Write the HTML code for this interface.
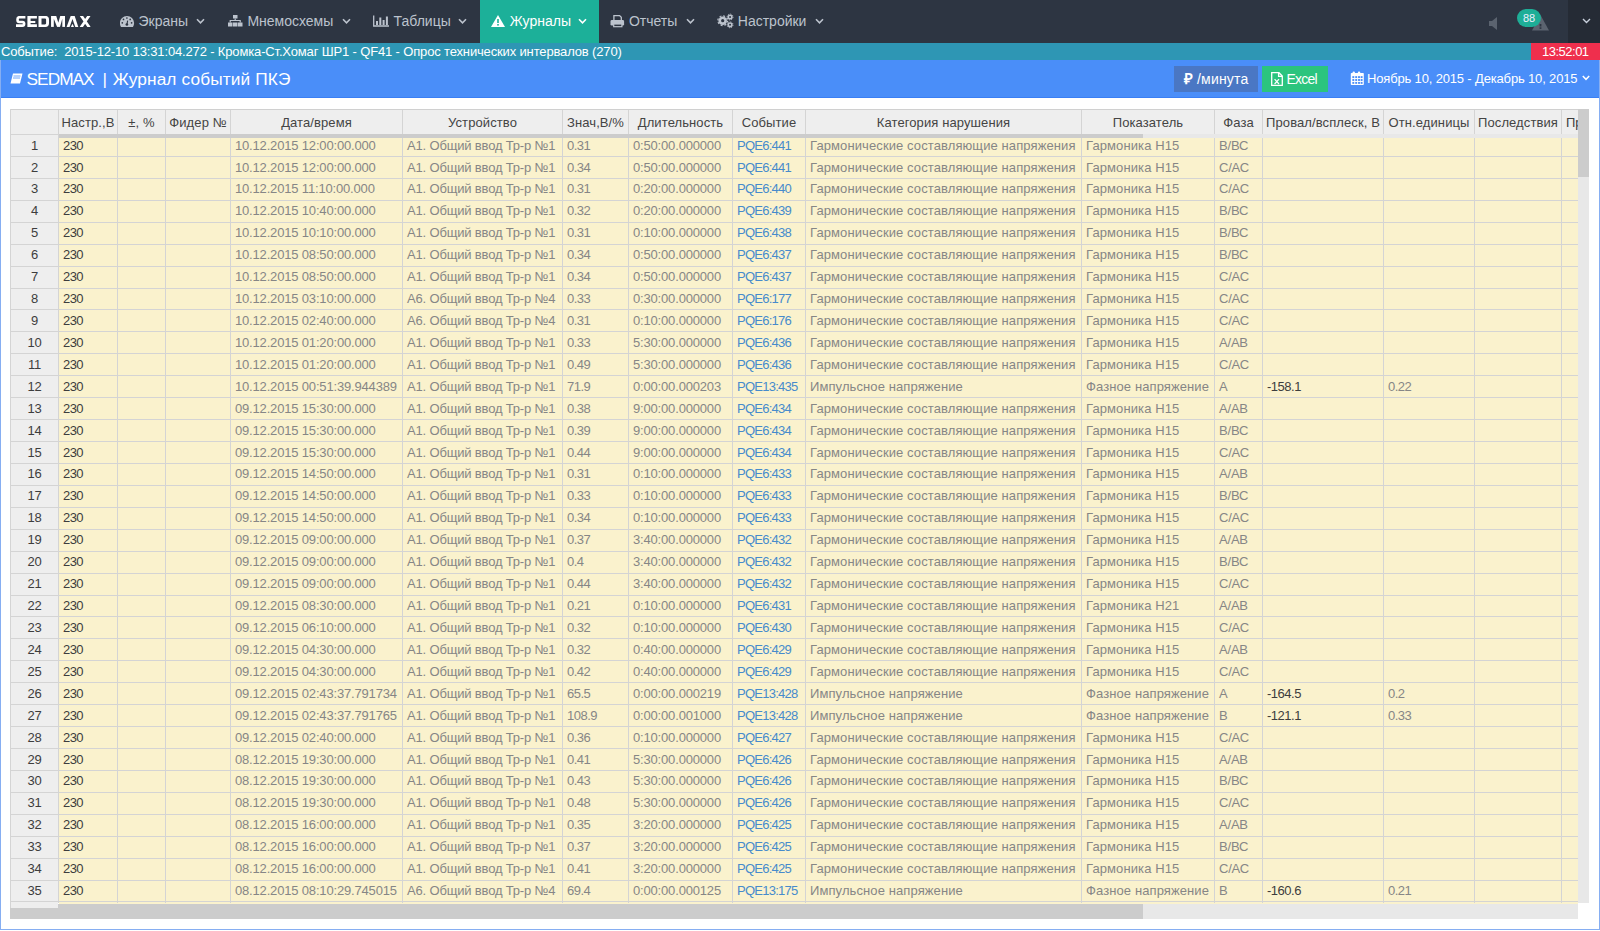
<!DOCTYPE html><html><head><meta charset="utf-8"><title>SEDMAX</title><style>
*{margin:0;padding:0;box-sizing:border-box}
html,body{width:1600px;height:931px;overflow:hidden;background:#fff;font-family:"Liberation Sans",sans-serif}
.abs{position:absolute}
#nav{position:absolute;left:0;top:0;width:1600px;height:43px;background:#2d3542}
#navr{position:absolute;left:1568px;top:0;width:32px;height:43px;background:#252b35}
.ni{position:absolute;top:0;height:43px;line-height:42px;font-size:14px;color:#bcc3cd;white-space:nowrap}
.ni.act{background:#1cb099;color:#fff}
#evt{position:absolute;left:0;top:43px;width:1600px;height:17px;background:#2e96b4;color:#fff;font-size:13px;line-height:18px;white-space:nowrap}
#clk{position:absolute;left:1531px;top:43px;width:69px;height:17px;background:#ef2f4d;color:#fff;font-size:13px;line-height:18px}
#panel{position:absolute;left:0;top:60px;width:1600px;height:871px;}
#ph{position:absolute;left:0;top:60px;width:1599px;height:38px;background:#4a8ef9;border-bottom:1px solid #3a7ff5}
.pb{position:absolute;background:#86aef2}
.btn{position:absolute;top:66px;height:26px;color:#fff;font-size:14px;line-height:26px;white-space:nowrap}
#tbl{position:absolute;left:0;top:0;width:1600px;height:931px;overflow:hidden}
.hl{position:absolute;height:1px;background:#d4d4d4}
.vl{position:absolute;width:1px;background:#d4d4d4}
.t{position:absolute;font-size:13px;white-space:nowrap;line-height:15px}
.g{color:#868686}
.d{color:#3d3d3d}
.lk{color:#468bcc}
.n{letter-spacing:-0.17px}
.v{letter-spacing:-0.5px}
.c{letter-spacing:0.1px}
.h{color:#444;letter-spacing:0.1px}
</style></head><body>
<div id="nav"></div><div id="navr"></div>
<svg class="abs" style="left:0;top:0" width="100" height="42" viewBox="0 0 100 42">
<defs><clipPath id="lc"><rect x="0" y="15.9" width="100" height="11"/></clipPath></defs>
<g clip-path="url(#lc)">
<path d="M25.4 17.25 H19.3 Q17.55 17.25 17.55 19 V20.3 Q17.55 22 19.3 22 H22.4 Q24.1 22 24.1 23.7 V23.9 Q24.1 25.6 22.4 25.6 H16" fill="none" stroke="#fff" stroke-width="2.6"/>
<path d="M27.4 15.9 H36.9 V18.6 H30.6 V20.9 H35.3 V23.1 H30.6 V24.3 H36.9 V26.9 H27.4 Z" fill="#fff"/>
<path d="M38.5 15.9 H45.3 Q49 15.9 49 19.6 V23.2 Q49 26.9 45.3 26.9 H38.5 Z M41.5 18.6 H45 Q46.1 18.6 46.1 19.7 V23.3 Q46.1 24.4 45 24.4 H41.5 Z" fill="#fff" fill-rule="evenodd"/>
<rect x="51.06" y="15.9" width="13.94" height="11" fill="#fff"/>
<path d="M56.2 15.9 H60.3 L58.3 22.8 Z M53.8 18.7 V26.9 H57.1 Z M62.3 18.7 V26.9 H60 Z" fill="#2d3542"/>
<path d="M70.7 15.9 H74.65 L78.3 26.9 H66.6 Z" fill="#fff"/>
<path d="M72.45 18.9 L75.3 26.9 H69.6 Z" fill="#2d3542"/>
<path d="M72.45 23.7 L74 26.9 H70.9 Z" fill="#fff"/>
<path d="M80.9 15.2 L89.4 27.6 M89.4 15.2 L80.9 27.6" fill="none" stroke="#fff" stroke-width="2.75"/>
</g>
</svg>
<div class="ni act" style="left:480px;width:119px"></div>
<svg class="abs" style="left:119.5px;top:15px" width="15" height="13" viewBox="0 0 15 13"><clipPath id="dc"><rect x="0" y="0" width="15" height="11.9"/></clipPath><circle cx="7" cy="8.1" r="7.1" fill="#bcc3cd" clip-path="url(#dc)"/><circle cx="6.9" cy="3" r="0.85" fill="#2d3542"/><circle cx="3.5" cy="4.4" r="0.85" fill="#2d3542"/><circle cx="10.2" cy="4.4" r="0.85" fill="#2d3542"/><circle cx="2.3" cy="7.8" r="0.85" fill="#2d3542"/><circle cx="11.6" cy="7.8" r="0.85" fill="#2d3542"/><path d="M7.6 5.6 L7 9.4" stroke="#2d3542" stroke-width="1.1"/><circle cx="6.9" cy="9.5" r="1.35" fill="#2d3542"/></svg>
<div class="ni" style="left:138.5px;color:#bcc3cd">Экраны</div>
<svg class="abs" style="left:196px;top:18px" width="9" height="7" viewBox="0 0 9 7"><path d="M1 1.2 L4.5 4.8 L8 1.2" fill="none" stroke="#bcc3cd" stroke-width="1.6"/></svg>
<svg class="abs" style="left:228.4px;top:15px" width="17" height="13" viewBox="0 0 17 13"><rect x="5" y="0" width="4.5" height="3.5" fill="#bcc3cd"/><path d="M7.2 3.5 V5.5 M2.2 7.5 V5.5 H12.2 V7.5" stroke="#bcc3cd" stroke-width="1.2" fill="none"/><rect x="0" y="7.5" width="4.5" height="4" fill="#bcc3cd"/><rect x="5" y="7.5" width="4.5" height="4" fill="#bcc3cd"/><rect x="10" y="7.5" width="4.5" height="4" fill="#bcc3cd"/></svg>
<div class="ni" style="left:247.4px;color:#bcc3cd">Мнемосхемы</div>
<svg class="abs" style="left:342px;top:18px" width="9" height="7" viewBox="0 0 9 7"><path d="M1 1.2 L4.5 4.8 L8 1.2" fill="none" stroke="#bcc3cd" stroke-width="1.6"/></svg>
<svg class="abs" style="left:373px;top:15px" width="17" height="13" viewBox="0 0 17 13"><path d="M0.7 0.5 V11 H16" stroke="#bcc3cd" stroke-width="1.3" fill="none"/><rect x="3" y="6" width="2" height="4" fill="#bcc3cd"/><rect x="6.3" y="2.5" width="2" height="7.5" fill="#bcc3cd"/><rect x="9.6" y="5" width="2" height="5" fill="#bcc3cd"/><rect x="12.9" y="1.5" width="2" height="8.5" fill="#bcc3cd"/></svg>
<div class="ni" style="left:393.6px;color:#bcc3cd">Таблицы</div>
<svg class="abs" style="left:458.3px;top:18px" width="9" height="7" viewBox="0 0 9 7"><path d="M1 1.2 L4.5 4.8 L8 1.2" fill="none" stroke="#bcc3cd" stroke-width="1.6"/></svg>
<svg class="abs" style="left:491.3px;top:15px" width="17" height="13" viewBox="0 0 17 13"><path d="M7 0 L14 12 H0 Z" fill="#fff"/><rect x="6.2" y="4" width="1.6" height="4" fill="#1cb099"/><rect x="6.2" y="9" width="1.6" height="1.6" fill="#1cb099"/></svg>
<div class="ni" style="left:509.8px;color:#fff">Журналы</div>
<svg class="abs" style="left:577.7px;top:18px" width="9" height="7" viewBox="0 0 9 7"><path d="M1 1.2 L4.5 4.8 L8 1.2" fill="none" stroke="#fff" stroke-width="1.6"/></svg>
<svg class="abs" style="left:610px;top:14px" width="15" height="14" viewBox="0 0 15 14"><path d="M3.9 1.6 H9.6 L11.3 3.3 V6.6 H3.9 Z" fill="none" stroke="#bcc3cd" stroke-width="1.3"/><rect x="0.5" y="6.1" width="13.6" height="5.4" rx="1.3" fill="#bcc3cd"/><rect x="3.7" y="10" width="8.2" height="2.7" fill="#2d3542" stroke="#bcc3cd" stroke-width="1.2"/></svg>
<div class="ni" style="left:628.9px;color:#bcc3cd">Отчеты</div>
<svg class="abs" style="left:685.8px;top:18px" width="9" height="7" viewBox="0 0 9 7"><path d="M1 1.2 L4.5 4.8 L8 1.2" fill="none" stroke="#bcc3cd" stroke-width="1.6"/></svg>
<svg class="abs" style="left:714px;top:12px" width="20" height="18" viewBox="0 0 20 18"><circle cx="8.7" cy="8.7" r="4.3" fill="#bcc3cd"/><circle cx="8.7" cy="8.7" r="4.85" fill="none" stroke="#bcc3cd" stroke-width="1.2" stroke-dasharray="1.9 1.9"/><circle cx="8.7" cy="8.7" r="1.6" fill="#2d3542"/><circle cx="16.05" cy="5" r="2.6" fill="#bcc3cd"/><circle cx="16.05" cy="5" r="2.95" fill="none" stroke="#bcc3cd" stroke-width="0.9" stroke-dasharray="1.15 1.15"/><circle cx="16.05" cy="5" r="1" fill="#2d3542"/><circle cx="16.05" cy="12.8" r="2.6" fill="#bcc3cd"/><circle cx="16.05" cy="12.8" r="2.95" fill="none" stroke="#bcc3cd" stroke-width="0.9" stroke-dasharray="1.15 1.15"/><circle cx="16.05" cy="12.8" r="1" fill="#2d3542"/></svg>
<div class="ni" style="left:737.8px;color:#bcc3cd">Настройки</div>
<svg class="abs" style="left:814.8px;top:18px" width="9" height="7" viewBox="0 0 9 7"><path d="M1 1.2 L4.5 4.8 L8 1.2" fill="none" stroke="#bcc3cd" stroke-width="1.6"/></svg>
<svg class="abs" style="left:1489px;top:17px" width="9" height="13" viewBox="0 0 9 13"><path d="M0 4 H3 L8 0 V13 L3 9 H0 Z" fill="#5b636f"/></svg>
<svg class="abs" style="left:1532px;top:15px" width="17" height="16" viewBox="0 0 17 16"><path d="M8.5 0 L17 15.5 H0 Z" fill="#5b636f"/><rect x="7.6" y="9" width="1.8" height="2.5" fill="#2d3542"/><rect x="7.6" y="12.3" width="1.8" height="1.6" fill="#2d3542"/></svg>
<div class="abs" style="left:1517px;top:9px;width:24px;height:18px;border-radius:9px;background:#1eae97;color:#eef;font-size:11px;line-height:18px;text-align:center">88</div>
<svg class="abs" style="left:1582px;top:18px" width="9" height="6" viewBox="0 0 9 6"><path d="M1 1 L4.5 4.5 L8 1" fill="none" stroke="#c8d0dc" stroke-width="1.4"/></svg>
<div id="evt"><span style="position:absolute;left:1px;top:1px;line-height:15px;letter-spacing:-0.15px">Событие:&nbsp; 2015-12-10 13:31:04.272 - Кромка-Ст.Хомаг ШР1 - QF41 - Опрос технических интервалов (270)</span></div>
<div id="clk"><span style="position:absolute;left:11px;top:1px;line-height:15px;letter-spacing:-0.5px">13:52:01</span></div>
<div id="ph"></div>
<div class="pb" style="left:0;top:60px;width:1px;height:870px"></div>
<div class="pb" style="left:1599px;top:60px;width:1px;height:870px"></div>
<div class="pb" style="left:0;top:929px;width:1600px;height:1px"></div>
<svg class="abs" style="left:10px;top:73px" width="13" height="12" viewBox="0 0 13 12"><path d="M3 0.5 H12.5 L10 10.5 H0.5 Z" fill="#fff"/><path d="M3.5 3 H10.5 M3 5 H10" stroke="#4a8ef9" stroke-width="0.8"/></svg>
<div class="abs" style="left:26.6px;top:68.7px;font-size:17.3px;line-height:20px;color:#fff;white-space:nowrap;letter-spacing:-1px">SEDMAX</div>
<div class="abs" style="left:102.6px;top:68.7px;font-size:17.3px;line-height:20px;color:#fff;white-space:nowrap">|</div>
<div class="abs" style="left:112.8px;top:68.7px;font-size:17.3px;line-height:20px;color:#fff;white-space:nowrap;letter-spacing:0.12px">Журнал событий ПКЭ</div>
<div class="btn" style="left:1174px;width:84px;background:#4a77c4"><span style="position:absolute;left:10px;font-weight:bold;font-size:15px">₽</span><span style="position:absolute;left:23px;letter-spacing:0.2px">/минута</span></div>
<div class="btn" style="left:1262px;width:66px;background:#2bc47e"><svg class="abs" style="left:9px;top:6px" width="12" height="14" viewBox="0 0 12 14"><path d="M0.7 0.7 H8 L11.3 4 V13.3 H0.7 Z M7.6 0.7 V4.4 H11.3" fill="none" stroke="#fff" stroke-width="1.3"/><path d="M3.6 7.2 L8 12 M8 7.2 L3.6 12" stroke="#fff" stroke-width="1.2"/></svg><span style="position:absolute;left:24.5px;letter-spacing:-0.75px">Excel</span></div>
<svg class="abs" style="left:1350px;top:71px" width="14" height="15" viewBox="0 0 14 15"><rect x="0.8" y="2" width="13" height="12.1" rx="0.8" fill="#fff"/><rect x="2.6" y="0.4" width="2.3" height="3" rx="1" fill="#fff"/><rect x="7.9" y="0.4" width="2.3" height="3" rx="1" fill="#fff"/><rect x="2.3499999999999996" y="5.1499999999999995" width="1.9" height="1.9" fill="#4a8ef9"/><rect x="5.25" y="5.1499999999999995" width="1.9" height="1.9" fill="#4a8ef9"/><rect x="8.05" y="5.1499999999999995" width="1.9" height="1.9" fill="#4a8ef9"/><rect x="10.65" y="5.1499999999999995" width="1.9" height="1.9" fill="#4a8ef9"/><rect x="2.3499999999999996" y="8.05" width="1.9" height="1.9" fill="#4a8ef9"/><rect x="5.25" y="8.05" width="1.9" height="1.9" fill="#4a8ef9"/><rect x="8.05" y="8.05" width="1.9" height="1.9" fill="#4a8ef9"/><rect x="10.65" y="8.05" width="1.9" height="1.9" fill="#4a8ef9"/><rect x="2.3499999999999996" y="10.950000000000001" width="1.9" height="1.9" fill="#4a8ef9"/><rect x="5.25" y="10.950000000000001" width="1.9" height="1.9" fill="#4a8ef9"/><rect x="8.05" y="10.950000000000001" width="1.9" height="1.9" fill="#4a8ef9"/><rect x="10.65" y="10.950000000000001" width="1.9" height="1.9" fill="#4a8ef9"/></svg>
<div class="abs" style="left:1367px;top:71px;font-size:13px;line-height:16px;color:#fff;white-space:nowrap;letter-spacing:-0.16px">Ноябрь 10, 2015 - Декабрь 10, 2015</div>
<svg class="abs" style="left:1582px;top:75px" width="8" height="6" viewBox="0 0 8 6"><path d="M0.8 1 L4 4.3 L7.2 1" fill="none" stroke="#fff" stroke-width="1.5"/></svg>
<div id="tbl"><div class="abs" style="left:10px;top:109px;width:1568px;height:1px;background:#d0d0d0"></div><div class="abs" style="left:10px;top:110px;width:1568px;height:24px;background:#eeeeee"></div><div class="abs" style="left:11px;top:134px;width:47px;height:774px;background:#eeeeee"></div><div class="abs" style="left:59px;top:134px;width:1519px;height:770px;background:#faf2cd"></div><div class="abs" style="left:58px;top:134px;width:1520px;height:4px;background:#e8e8e8"></div><div class="abs" style="left:58px;top:134px;width:1085px;height:4px;background:#cccccc"></div><div class="hl" style="left:10px;top:134px;width:48px"></div><div class="hl" style="left:10px;top:156px;width:1568px"></div><div class="hl" style="left:10px;top:178px;width:1568px"></div><div class="hl" style="left:10px;top:200px;width:1568px"></div><div class="hl" style="left:10px;top:222px;width:1568px"></div><div class="hl" style="left:10px;top:244px;width:1568px"></div><div class="hl" style="left:10px;top:266px;width:1568px"></div><div class="hl" style="left:10px;top:288px;width:1568px"></div><div class="hl" style="left:10px;top:309px;width:1568px"></div><div class="hl" style="left:10px;top:331px;width:1568px"></div><div class="hl" style="left:10px;top:353px;width:1568px"></div><div class="hl" style="left:10px;top:375px;width:1568px"></div><div class="hl" style="left:10px;top:397px;width:1568px"></div><div class="hl" style="left:10px;top:419px;width:1568px"></div><div class="hl" style="left:10px;top:441px;width:1568px"></div><div class="hl" style="left:10px;top:463px;width:1568px"></div><div class="hl" style="left:10px;top:485px;width:1568px"></div><div class="hl" style="left:10px;top:507px;width:1568px"></div><div class="hl" style="left:10px;top:529px;width:1568px"></div><div class="hl" style="left:10px;top:551px;width:1568px"></div><div class="hl" style="left:10px;top:573px;width:1568px"></div><div class="hl" style="left:10px;top:595px;width:1568px"></div><div class="hl" style="left:10px;top:616px;width:1568px"></div><div class="hl" style="left:10px;top:638px;width:1568px"></div><div class="hl" style="left:10px;top:660px;width:1568px"></div><div class="hl" style="left:10px;top:682px;width:1568px"></div><div class="hl" style="left:10px;top:704px;width:1568px"></div><div class="hl" style="left:10px;top:726px;width:1568px"></div><div class="hl" style="left:10px;top:748px;width:1568px"></div><div class="hl" style="left:10px;top:770px;width:1568px"></div><div class="hl" style="left:10px;top:792px;width:1568px"></div><div class="hl" style="left:10px;top:814px;width:1568px"></div><div class="hl" style="left:10px;top:836px;width:1568px"></div><div class="hl" style="left:10px;top:858px;width:1568px"></div><div class="hl" style="left:10px;top:880px;width:1568px"></div><div class="hl" style="left:10px;top:901px;width:1568px"></div><div class="vl" style="left:10px;top:109px;height:799px"></div><div class="vl" style="left:58px;top:110px;height:793px"></div><div class="vl" style="left:117px;top:110px;height:24px"></div><div class="vl" style="left:117px;top:138px;height:765px"></div><div class="vl" style="left:165px;top:110px;height:24px"></div><div class="vl" style="left:165px;top:138px;height:765px"></div><div class="vl" style="left:230px;top:110px;height:24px"></div><div class="vl" style="left:230px;top:138px;height:765px"></div><div class="vl" style="left:402px;top:110px;height:24px"></div><div class="vl" style="left:402px;top:138px;height:765px"></div><div class="vl" style="left:562px;top:110px;height:24px"></div><div class="vl" style="left:562px;top:138px;height:765px"></div><div class="vl" style="left:628px;top:110px;height:24px"></div><div class="vl" style="left:628px;top:138px;height:765px"></div><div class="vl" style="left:732px;top:110px;height:24px"></div><div class="vl" style="left:732px;top:138px;height:765px"></div><div class="vl" style="left:805px;top:110px;height:24px"></div><div class="vl" style="left:805px;top:138px;height:765px"></div><div class="vl" style="left:1081px;top:110px;height:24px"></div><div class="vl" style="left:1081px;top:138px;height:765px"></div><div class="vl" style="left:1214px;top:110px;height:24px"></div><div class="vl" style="left:1214px;top:138px;height:765px"></div><div class="vl" style="left:1262px;top:110px;height:24px"></div><div class="vl" style="left:1262px;top:138px;height:765px"></div><div class="vl" style="left:1383px;top:110px;height:24px"></div><div class="vl" style="left:1383px;top:138px;height:765px"></div><div class="vl" style="left:1474px;top:110px;height:24px"></div><div class="vl" style="left:1474px;top:138px;height:765px"></div><div class="vl" style="left:1561px;top:110px;height:24px"></div><div class="vl" style="left:1561px;top:138px;height:765px"></div><div class="t d h" style="left:59px;width:58px;top:115px;text-align:center">Настр.,В</div><div class="t d h" style="left:118px;width:47px;top:115px;text-align:center">±, %</div><div class="t d h" style="left:166px;width:64px;top:115px;text-align:center">Фидер №</div><div class="t d h" style="left:231px;width:171px;top:115px;text-align:center">Дата/время</div><div class="t d h" style="left:403px;width:159px;top:115px;text-align:center">Устройство</div><div class="t d h" style="left:563px;width:65px;top:115px;text-align:center">Знач,В/%</div><div class="t d h" style="left:629px;width:103px;top:115px;text-align:center">Длительность</div><div class="t d h" style="left:733px;width:72px;top:115px;text-align:center">Событие</div><div class="t d h" style="left:806px;width:275px;top:115px;text-align:center">Категория нарушения</div><div class="t d h" style="left:1082px;width:132px;top:115px;text-align:center">Показатель</div><div class="t d h" style="left:1215px;width:47px;top:115px;text-align:center">Фаза</div><div class="t d h" style="left:1263px;width:120px;top:115px;text-align:center">Провал/всплеск, В</div><div class="t d h" style="left:1384px;width:90px;top:115px;text-align:center">Отн.единицы</div><div class="t d h" style="left:1475px;width:86px;top:115px;text-align:center">Последствия</div><div class="t d" style="left:1566px;top:115px">Пр</div><div class="t d" style="left:11px;width:47px;top:137.6px;text-align:center;letter-spacing:-0.3px">1</div><div class="t d" style="left:63px;top:137.6px;letter-spacing:-0.6px">230</div><div class="t g n" style="left:235px;top:137.6px">10.12.2015 12:00:00.000</div><div class="t g" style="left:407px;top:137.6px;letter-spacing:-0.17px">А1. Общий ввод Тр-р №1</div><div class="t g v" style="left:567px;top:137.6px">0.31</div><div class="t g n" style="left:633px;top:137.6px">0:50:00.000000</div><div class="t lk" style="left:737px;top:137.6px;letter-spacing:-0.75px">PQE6:441</div><div class="t g c" style="left:810px;top:137.6px">Гармонические составляющие напряжения</div><div class="t g c" style="left:1086px;top:137.6px">Гармоника Н15</div><div class="t g" style="left:1219px;top:137.6px;letter-spacing:-0.2px">В/ВС</div><div class="t d" style="left:11px;width:47px;top:159.53px;text-align:center;letter-spacing:-0.3px">2</div><div class="t d" style="left:63px;top:159.53px;letter-spacing:-0.6px">230</div><div class="t g n" style="left:235px;top:159.53px">10.12.2015 12:00:00.000</div><div class="t g" style="left:407px;top:159.53px;letter-spacing:-0.17px">А1. Общий ввод Тр-р №1</div><div class="t g v" style="left:567px;top:159.53px">0.34</div><div class="t g n" style="left:633px;top:159.53px">0:50:00.000000</div><div class="t lk" style="left:737px;top:159.53px;letter-spacing:-0.75px">PQE6:441</div><div class="t g c" style="left:810px;top:159.53px">Гармонические составляющие напряжения</div><div class="t g c" style="left:1086px;top:159.53px">Гармоника Н15</div><div class="t g" style="left:1219px;top:159.53px;letter-spacing:-0.2px">С/АС</div><div class="t d" style="left:11px;width:47px;top:181.45px;text-align:center;letter-spacing:-0.3px">3</div><div class="t d" style="left:63px;top:181.45px;letter-spacing:-0.6px">230</div><div class="t g n" style="left:235px;top:181.45px">10.12.2015 11:10:00.000</div><div class="t g" style="left:407px;top:181.45px;letter-spacing:-0.17px">А1. Общий ввод Тр-р №1</div><div class="t g v" style="left:567px;top:181.45px">0.31</div><div class="t g n" style="left:633px;top:181.45px">0:20:00.000000</div><div class="t lk" style="left:737px;top:181.45px;letter-spacing:-0.75px">PQE6:440</div><div class="t g c" style="left:810px;top:181.45px">Гармонические составляющие напряжения</div><div class="t g c" style="left:1086px;top:181.45px">Гармоника Н15</div><div class="t g" style="left:1219px;top:181.45px;letter-spacing:-0.2px">С/АС</div><div class="t d" style="left:11px;width:47px;top:203.38px;text-align:center;letter-spacing:-0.3px">4</div><div class="t d" style="left:63px;top:203.38px;letter-spacing:-0.6px">230</div><div class="t g n" style="left:235px;top:203.38px">10.12.2015 10:40:00.000</div><div class="t g" style="left:407px;top:203.38px;letter-spacing:-0.17px">А1. Общий ввод Тр-р №1</div><div class="t g v" style="left:567px;top:203.38px">0.32</div><div class="t g n" style="left:633px;top:203.38px">0:20:00.000000</div><div class="t lk" style="left:737px;top:203.38px;letter-spacing:-0.75px">PQE6:439</div><div class="t g c" style="left:810px;top:203.38px">Гармонические составляющие напряжения</div><div class="t g c" style="left:1086px;top:203.38px">Гармоника Н15</div><div class="t g" style="left:1219px;top:203.38px;letter-spacing:-0.2px">В/ВС</div><div class="t d" style="left:11px;width:47px;top:225.3px;text-align:center;letter-spacing:-0.3px">5</div><div class="t d" style="left:63px;top:225.3px;letter-spacing:-0.6px">230</div><div class="t g n" style="left:235px;top:225.3px">10.12.2015 10:10:00.000</div><div class="t g" style="left:407px;top:225.3px;letter-spacing:-0.17px">А1. Общий ввод Тр-р №1</div><div class="t g v" style="left:567px;top:225.3px">0.31</div><div class="t g n" style="left:633px;top:225.3px">0:10:00.000000</div><div class="t lk" style="left:737px;top:225.3px;letter-spacing:-0.75px">PQE6:438</div><div class="t g c" style="left:810px;top:225.3px">Гармонические составляющие напряжения</div><div class="t g c" style="left:1086px;top:225.3px">Гармоника Н15</div><div class="t g" style="left:1219px;top:225.3px;letter-spacing:-0.2px">В/ВС</div><div class="t d" style="left:11px;width:47px;top:247.23px;text-align:center;letter-spacing:-0.3px">6</div><div class="t d" style="left:63px;top:247.23px;letter-spacing:-0.6px">230</div><div class="t g n" style="left:235px;top:247.23px">10.12.2015 08:50:00.000</div><div class="t g" style="left:407px;top:247.23px;letter-spacing:-0.17px">А1. Общий ввод Тр-р №1</div><div class="t g v" style="left:567px;top:247.23px">0.34</div><div class="t g n" style="left:633px;top:247.23px">0:50:00.000000</div><div class="t lk" style="left:737px;top:247.23px;letter-spacing:-0.75px">PQE6:437</div><div class="t g c" style="left:810px;top:247.23px">Гармонические составляющие напряжения</div><div class="t g c" style="left:1086px;top:247.23px">Гармоника Н15</div><div class="t g" style="left:1219px;top:247.23px;letter-spacing:-0.2px">В/ВС</div><div class="t d" style="left:11px;width:47px;top:269.16px;text-align:center;letter-spacing:-0.3px">7</div><div class="t d" style="left:63px;top:269.16px;letter-spacing:-0.6px">230</div><div class="t g n" style="left:235px;top:269.16px">10.12.2015 08:50:00.000</div><div class="t g" style="left:407px;top:269.16px;letter-spacing:-0.17px">А1. Общий ввод Тр-р №1</div><div class="t g v" style="left:567px;top:269.16px">0.34</div><div class="t g n" style="left:633px;top:269.16px">0:50:00.000000</div><div class="t lk" style="left:737px;top:269.16px;letter-spacing:-0.75px">PQE6:437</div><div class="t g c" style="left:810px;top:269.16px">Гармонические составляющие напряжения</div><div class="t g c" style="left:1086px;top:269.16px">Гармоника Н15</div><div class="t g" style="left:1219px;top:269.16px;letter-spacing:-0.2px">С/АС</div><div class="t d" style="left:11px;width:47px;top:291.08px;text-align:center;letter-spacing:-0.3px">8</div><div class="t d" style="left:63px;top:291.08px;letter-spacing:-0.6px">230</div><div class="t g n" style="left:235px;top:291.08px">10.12.2015 03:10:00.000</div><div class="t g" style="left:407px;top:291.08px;letter-spacing:-0.17px">А6. Общий ввод Тр-р №4</div><div class="t g v" style="left:567px;top:291.08px">0.33</div><div class="t g n" style="left:633px;top:291.08px">0:30:00.000000</div><div class="t lk" style="left:737px;top:291.08px;letter-spacing:-0.75px">PQE6:177</div><div class="t g c" style="left:810px;top:291.08px">Гармонические составляющие напряжения</div><div class="t g c" style="left:1086px;top:291.08px">Гармоника Н15</div><div class="t g" style="left:1219px;top:291.08px;letter-spacing:-0.2px">С/АС</div><div class="t d" style="left:11px;width:47px;top:313.01px;text-align:center;letter-spacing:-0.3px">9</div><div class="t d" style="left:63px;top:313.01px;letter-spacing:-0.6px">230</div><div class="t g n" style="left:235px;top:313.01px">10.12.2015 02:40:00.000</div><div class="t g" style="left:407px;top:313.01px;letter-spacing:-0.17px">А6. Общий ввод Тр-р №4</div><div class="t g v" style="left:567px;top:313.01px">0.31</div><div class="t g n" style="left:633px;top:313.01px">0:10:00.000000</div><div class="t lk" style="left:737px;top:313.01px;letter-spacing:-0.75px">PQE6:176</div><div class="t g c" style="left:810px;top:313.01px">Гармонические составляющие напряжения</div><div class="t g c" style="left:1086px;top:313.01px">Гармоника Н15</div><div class="t g" style="left:1219px;top:313.01px;letter-spacing:-0.2px">С/АС</div><div class="t d" style="left:11px;width:47px;top:334.93px;text-align:center;letter-spacing:-0.3px">10</div><div class="t d" style="left:63px;top:334.93px;letter-spacing:-0.6px">230</div><div class="t g n" style="left:235px;top:334.93px">10.12.2015 01:20:00.000</div><div class="t g" style="left:407px;top:334.93px;letter-spacing:-0.17px">А1. Общий ввод Тр-р №1</div><div class="t g v" style="left:567px;top:334.93px">0.33</div><div class="t g n" style="left:633px;top:334.93px">5:30:00.000000</div><div class="t lk" style="left:737px;top:334.93px;letter-spacing:-0.75px">PQE6:436</div><div class="t g c" style="left:810px;top:334.93px">Гармонические составляющие напряжения</div><div class="t g c" style="left:1086px;top:334.93px">Гармоника Н15</div><div class="t g" style="left:1219px;top:334.93px;letter-spacing:-0.2px">А/АВ</div><div class="t d" style="left:11px;width:47px;top:356.86px;text-align:center;letter-spacing:-0.3px">11</div><div class="t d" style="left:63px;top:356.86px;letter-spacing:-0.6px">230</div><div class="t g n" style="left:235px;top:356.86px">10.12.2015 01:20:00.000</div><div class="t g" style="left:407px;top:356.86px;letter-spacing:-0.17px">А1. Общий ввод Тр-р №1</div><div class="t g v" style="left:567px;top:356.86px">0.49</div><div class="t g n" style="left:633px;top:356.86px">5:30:00.000000</div><div class="t lk" style="left:737px;top:356.86px;letter-spacing:-0.75px">PQE6:436</div><div class="t g c" style="left:810px;top:356.86px">Гармонические составляющие напряжения</div><div class="t g c" style="left:1086px;top:356.86px">Гармоника Н15</div><div class="t g" style="left:1219px;top:356.86px;letter-spacing:-0.2px">С/АС</div><div class="t d" style="left:11px;width:47px;top:378.79px;text-align:center;letter-spacing:-0.3px">12</div><div class="t d" style="left:63px;top:378.79px;letter-spacing:-0.6px">230</div><div class="t g n" style="left:235px;top:378.79px">10.12.2015 00:51:39.944389</div><div class="t g" style="left:407px;top:378.79px;letter-spacing:-0.17px">А1. Общий ввод Тр-р №1</div><div class="t g v" style="left:567px;top:378.79px">71.9</div><div class="t g n" style="left:633px;top:378.79px">0:00:00.000203</div><div class="t lk" style="left:737px;top:378.79px;letter-spacing:-0.75px">PQE13:435</div><div class="t g c" style="left:810px;top:378.79px">Импульсное напряжение</div><div class="t g c" style="left:1086px;top:378.79px">Фазное напряжение</div><div class="t g" style="left:1219px;top:378.79px;letter-spacing:-0.2px">А</div><div class="t d v" style="left:1267px;top:378.79px">-158.1</div><div class="t g v" style="left:1388px;top:378.79px">0.22</div><div class="t d" style="left:11px;width:47px;top:400.71px;text-align:center;letter-spacing:-0.3px">13</div><div class="t d" style="left:63px;top:400.71px;letter-spacing:-0.6px">230</div><div class="t g n" style="left:235px;top:400.71px">09.12.2015 15:30:00.000</div><div class="t g" style="left:407px;top:400.71px;letter-spacing:-0.17px">А1. Общий ввод Тр-р №1</div><div class="t g v" style="left:567px;top:400.71px">0.38</div><div class="t g n" style="left:633px;top:400.71px">9:00:00.000000</div><div class="t lk" style="left:737px;top:400.71px;letter-spacing:-0.75px">PQE6:434</div><div class="t g c" style="left:810px;top:400.71px">Гармонические составляющие напряжения</div><div class="t g c" style="left:1086px;top:400.71px">Гармоника Н15</div><div class="t g" style="left:1219px;top:400.71px;letter-spacing:-0.2px">А/АВ</div><div class="t d" style="left:11px;width:47px;top:422.64px;text-align:center;letter-spacing:-0.3px">14</div><div class="t d" style="left:63px;top:422.64px;letter-spacing:-0.6px">230</div><div class="t g n" style="left:235px;top:422.64px">09.12.2015 15:30:00.000</div><div class="t g" style="left:407px;top:422.64px;letter-spacing:-0.17px">А1. Общий ввод Тр-р №1</div><div class="t g v" style="left:567px;top:422.64px">0.39</div><div class="t g n" style="left:633px;top:422.64px">9:00:00.000000</div><div class="t lk" style="left:737px;top:422.64px;letter-spacing:-0.75px">PQE6:434</div><div class="t g c" style="left:810px;top:422.64px">Гармонические составляющие напряжения</div><div class="t g c" style="left:1086px;top:422.64px">Гармоника Н15</div><div class="t g" style="left:1219px;top:422.64px;letter-spacing:-0.2px">В/ВС</div><div class="t d" style="left:11px;width:47px;top:444.56px;text-align:center;letter-spacing:-0.3px">15</div><div class="t d" style="left:63px;top:444.56px;letter-spacing:-0.6px">230</div><div class="t g n" style="left:235px;top:444.56px">09.12.2015 15:30:00.000</div><div class="t g" style="left:407px;top:444.56px;letter-spacing:-0.17px">А1. Общий ввод Тр-р №1</div><div class="t g v" style="left:567px;top:444.56px">0.44</div><div class="t g n" style="left:633px;top:444.56px">9:00:00.000000</div><div class="t lk" style="left:737px;top:444.56px;letter-spacing:-0.75px">PQE6:434</div><div class="t g c" style="left:810px;top:444.56px">Гармонические составляющие напряжения</div><div class="t g c" style="left:1086px;top:444.56px">Гармоника Н15</div><div class="t g" style="left:1219px;top:444.56px;letter-spacing:-0.2px">С/АС</div><div class="t d" style="left:11px;width:47px;top:466.49px;text-align:center;letter-spacing:-0.3px">16</div><div class="t d" style="left:63px;top:466.49px;letter-spacing:-0.6px">230</div><div class="t g n" style="left:235px;top:466.49px">09.12.2015 14:50:00.000</div><div class="t g" style="left:407px;top:466.49px;letter-spacing:-0.17px">А1. Общий ввод Тр-р №1</div><div class="t g v" style="left:567px;top:466.49px">0.31</div><div class="t g n" style="left:633px;top:466.49px">0:10:00.000000</div><div class="t lk" style="left:737px;top:466.49px;letter-spacing:-0.75px">PQE6:433</div><div class="t g c" style="left:810px;top:466.49px">Гармонические составляющие напряжения</div><div class="t g c" style="left:1086px;top:466.49px">Гармоника Н15</div><div class="t g" style="left:1219px;top:466.49px;letter-spacing:-0.2px">А/АВ</div><div class="t d" style="left:11px;width:47px;top:488.42px;text-align:center;letter-spacing:-0.3px">17</div><div class="t d" style="left:63px;top:488.42px;letter-spacing:-0.6px">230</div><div class="t g n" style="left:235px;top:488.42px">09.12.2015 14:50:00.000</div><div class="t g" style="left:407px;top:488.42px;letter-spacing:-0.17px">А1. Общий ввод Тр-р №1</div><div class="t g v" style="left:567px;top:488.42px">0.33</div><div class="t g n" style="left:633px;top:488.42px">0:10:00.000000</div><div class="t lk" style="left:737px;top:488.42px;letter-spacing:-0.75px">PQE6:433</div><div class="t g c" style="left:810px;top:488.42px">Гармонические составляющие напряжения</div><div class="t g c" style="left:1086px;top:488.42px">Гармоника Н15</div><div class="t g" style="left:1219px;top:488.42px;letter-spacing:-0.2px">В/ВС</div><div class="t d" style="left:11px;width:47px;top:510.34px;text-align:center;letter-spacing:-0.3px">18</div><div class="t d" style="left:63px;top:510.34px;letter-spacing:-0.6px">230</div><div class="t g n" style="left:235px;top:510.34px">09.12.2015 14:50:00.000</div><div class="t g" style="left:407px;top:510.34px;letter-spacing:-0.17px">А1. Общий ввод Тр-р №1</div><div class="t g v" style="left:567px;top:510.34px">0.34</div><div class="t g n" style="left:633px;top:510.34px">0:10:00.000000</div><div class="t lk" style="left:737px;top:510.34px;letter-spacing:-0.75px">PQE6:433</div><div class="t g c" style="left:810px;top:510.34px">Гармонические составляющие напряжения</div><div class="t g c" style="left:1086px;top:510.34px">Гармоника Н15</div><div class="t g" style="left:1219px;top:510.34px;letter-spacing:-0.2px">С/АС</div><div class="t d" style="left:11px;width:47px;top:532.27px;text-align:center;letter-spacing:-0.3px">19</div><div class="t d" style="left:63px;top:532.27px;letter-spacing:-0.6px">230</div><div class="t g n" style="left:235px;top:532.27px">09.12.2015 09:00:00.000</div><div class="t g" style="left:407px;top:532.27px;letter-spacing:-0.17px">А1. Общий ввод Тр-р №1</div><div class="t g v" style="left:567px;top:532.27px">0.37</div><div class="t g n" style="left:633px;top:532.27px">3:40:00.000000</div><div class="t lk" style="left:737px;top:532.27px;letter-spacing:-0.75px">PQE6:432</div><div class="t g c" style="left:810px;top:532.27px">Гармонические составляющие напряжения</div><div class="t g c" style="left:1086px;top:532.27px">Гармоника Н15</div><div class="t g" style="left:1219px;top:532.27px;letter-spacing:-0.2px">А/АВ</div><div class="t d" style="left:11px;width:47px;top:554.19px;text-align:center;letter-spacing:-0.3px">20</div><div class="t d" style="left:63px;top:554.19px;letter-spacing:-0.6px">230</div><div class="t g n" style="left:235px;top:554.19px">09.12.2015 09:00:00.000</div><div class="t g" style="left:407px;top:554.19px;letter-spacing:-0.17px">А1. Общий ввод Тр-р №1</div><div class="t g v" style="left:567px;top:554.19px">0.4</div><div class="t g n" style="left:633px;top:554.19px">3:40:00.000000</div><div class="t lk" style="left:737px;top:554.19px;letter-spacing:-0.75px">PQE6:432</div><div class="t g c" style="left:810px;top:554.19px">Гармонические составляющие напряжения</div><div class="t g c" style="left:1086px;top:554.19px">Гармоника Н15</div><div class="t g" style="left:1219px;top:554.19px;letter-spacing:-0.2px">В/ВС</div><div class="t d" style="left:11px;width:47px;top:576.12px;text-align:center;letter-spacing:-0.3px">21</div><div class="t d" style="left:63px;top:576.12px;letter-spacing:-0.6px">230</div><div class="t g n" style="left:235px;top:576.12px">09.12.2015 09:00:00.000</div><div class="t g" style="left:407px;top:576.12px;letter-spacing:-0.17px">А1. Общий ввод Тр-р №1</div><div class="t g v" style="left:567px;top:576.12px">0.44</div><div class="t g n" style="left:633px;top:576.12px">3:40:00.000000</div><div class="t lk" style="left:737px;top:576.12px;letter-spacing:-0.75px">PQE6:432</div><div class="t g c" style="left:810px;top:576.12px">Гармонические составляющие напряжения</div><div class="t g c" style="left:1086px;top:576.12px">Гармоника Н15</div><div class="t g" style="left:1219px;top:576.12px;letter-spacing:-0.2px">С/АС</div><div class="t d" style="left:11px;width:47px;top:598.05px;text-align:center;letter-spacing:-0.3px">22</div><div class="t d" style="left:63px;top:598.05px;letter-spacing:-0.6px">230</div><div class="t g n" style="left:235px;top:598.05px">09.12.2015 08:30:00.000</div><div class="t g" style="left:407px;top:598.05px;letter-spacing:-0.17px">А1. Общий ввод Тр-р №1</div><div class="t g v" style="left:567px;top:598.05px">0.21</div><div class="t g n" style="left:633px;top:598.05px">0:10:00.000000</div><div class="t lk" style="left:737px;top:598.05px;letter-spacing:-0.75px">PQE6:431</div><div class="t g c" style="left:810px;top:598.05px">Гармонические составляющие напряжения</div><div class="t g c" style="left:1086px;top:598.05px">Гармоника Н21</div><div class="t g" style="left:1219px;top:598.05px;letter-spacing:-0.2px">А/АВ</div><div class="t d" style="left:11px;width:47px;top:619.97px;text-align:center;letter-spacing:-0.3px">23</div><div class="t d" style="left:63px;top:619.97px;letter-spacing:-0.6px">230</div><div class="t g n" style="left:235px;top:619.97px">09.12.2015 06:10:00.000</div><div class="t g" style="left:407px;top:619.97px;letter-spacing:-0.17px">А1. Общий ввод Тр-р №1</div><div class="t g v" style="left:567px;top:619.97px">0.32</div><div class="t g n" style="left:633px;top:619.97px">0:10:00.000000</div><div class="t lk" style="left:737px;top:619.97px;letter-spacing:-0.75px">PQE6:430</div><div class="t g c" style="left:810px;top:619.97px">Гармонические составляющие напряжения</div><div class="t g c" style="left:1086px;top:619.97px">Гармоника Н15</div><div class="t g" style="left:1219px;top:619.97px;letter-spacing:-0.2px">С/АС</div><div class="t d" style="left:11px;width:47px;top:641.9px;text-align:center;letter-spacing:-0.3px">24</div><div class="t d" style="left:63px;top:641.9px;letter-spacing:-0.6px">230</div><div class="t g n" style="left:235px;top:641.9px">09.12.2015 04:30:00.000</div><div class="t g" style="left:407px;top:641.9px;letter-spacing:-0.17px">А1. Общий ввод Тр-р №1</div><div class="t g v" style="left:567px;top:641.9px">0.32</div><div class="t g n" style="left:633px;top:641.9px">0:40:00.000000</div><div class="t lk" style="left:737px;top:641.9px;letter-spacing:-0.75px">PQE6:429</div><div class="t g c" style="left:810px;top:641.9px">Гармонические составляющие напряжения</div><div class="t g c" style="left:1086px;top:641.9px">Гармоника Н15</div><div class="t g" style="left:1219px;top:641.9px;letter-spacing:-0.2px">А/АВ</div><div class="t d" style="left:11px;width:47px;top:663.82px;text-align:center;letter-spacing:-0.3px">25</div><div class="t d" style="left:63px;top:663.82px;letter-spacing:-0.6px">230</div><div class="t g n" style="left:235px;top:663.82px">09.12.2015 04:30:00.000</div><div class="t g" style="left:407px;top:663.82px;letter-spacing:-0.17px">А1. Общий ввод Тр-р №1</div><div class="t g v" style="left:567px;top:663.82px">0.42</div><div class="t g n" style="left:633px;top:663.82px">0:40:00.000000</div><div class="t lk" style="left:737px;top:663.82px;letter-spacing:-0.75px">PQE6:429</div><div class="t g c" style="left:810px;top:663.82px">Гармонические составляющие напряжения</div><div class="t g c" style="left:1086px;top:663.82px">Гармоника Н15</div><div class="t g" style="left:1219px;top:663.82px;letter-spacing:-0.2px">С/АС</div><div class="t d" style="left:11px;width:47px;top:685.75px;text-align:center;letter-spacing:-0.3px">26</div><div class="t d" style="left:63px;top:685.75px;letter-spacing:-0.6px">230</div><div class="t g n" style="left:235px;top:685.75px">09.12.2015 02:43:37.791734</div><div class="t g" style="left:407px;top:685.75px;letter-spacing:-0.17px">А1. Общий ввод Тр-р №1</div><div class="t g v" style="left:567px;top:685.75px">65.5</div><div class="t g n" style="left:633px;top:685.75px">0:00:00.000219</div><div class="t lk" style="left:737px;top:685.75px;letter-spacing:-0.75px">PQE13:428</div><div class="t g c" style="left:810px;top:685.75px">Импульсное напряжение</div><div class="t g c" style="left:1086px;top:685.75px">Фазное напряжение</div><div class="t g" style="left:1219px;top:685.75px;letter-spacing:-0.2px">А</div><div class="t d v" style="left:1267px;top:685.75px">-164.5</div><div class="t g v" style="left:1388px;top:685.75px">0.2</div><div class="t d" style="left:11px;width:47px;top:707.68px;text-align:center;letter-spacing:-0.3px">27</div><div class="t d" style="left:63px;top:707.68px;letter-spacing:-0.6px">230</div><div class="t g n" style="left:235px;top:707.68px">09.12.2015 02:43:37.791765</div><div class="t g" style="left:407px;top:707.68px;letter-spacing:-0.17px">А1. Общий ввод Тр-р №1</div><div class="t g v" style="left:567px;top:707.68px">108.9</div><div class="t g n" style="left:633px;top:707.68px">0:00:00.001000</div><div class="t lk" style="left:737px;top:707.68px;letter-spacing:-0.75px">PQE13:428</div><div class="t g c" style="left:810px;top:707.68px">Импульсное напряжение</div><div class="t g c" style="left:1086px;top:707.68px">Фазное напряжение</div><div class="t g" style="left:1219px;top:707.68px;letter-spacing:-0.2px">В</div><div class="t d v" style="left:1267px;top:707.68px">-121.1</div><div class="t g v" style="left:1388px;top:707.68px">0.33</div><div class="t d" style="left:11px;width:47px;top:729.6px;text-align:center;letter-spacing:-0.3px">28</div><div class="t d" style="left:63px;top:729.6px;letter-spacing:-0.6px">230</div><div class="t g n" style="left:235px;top:729.6px">09.12.2015 02:40:00.000</div><div class="t g" style="left:407px;top:729.6px;letter-spacing:-0.17px">А1. Общий ввод Тр-р №1</div><div class="t g v" style="left:567px;top:729.6px">0.36</div><div class="t g n" style="left:633px;top:729.6px">0:10:00.000000</div><div class="t lk" style="left:737px;top:729.6px;letter-spacing:-0.75px">PQE6:427</div><div class="t g c" style="left:810px;top:729.6px">Гармонические составляющие напряжения</div><div class="t g c" style="left:1086px;top:729.6px">Гармоника Н15</div><div class="t g" style="left:1219px;top:729.6px;letter-spacing:-0.2px">С/АС</div><div class="t d" style="left:11px;width:47px;top:751.53px;text-align:center;letter-spacing:-0.3px">29</div><div class="t d" style="left:63px;top:751.53px;letter-spacing:-0.6px">230</div><div class="t g n" style="left:235px;top:751.53px">08.12.2015 19:30:00.000</div><div class="t g" style="left:407px;top:751.53px;letter-spacing:-0.17px">А1. Общий ввод Тр-р №1</div><div class="t g v" style="left:567px;top:751.53px">0.41</div><div class="t g n" style="left:633px;top:751.53px">5:30:00.000000</div><div class="t lk" style="left:737px;top:751.53px;letter-spacing:-0.75px">PQE6:426</div><div class="t g c" style="left:810px;top:751.53px">Гармонические составляющие напряжения</div><div class="t g c" style="left:1086px;top:751.53px">Гармоника Н15</div><div class="t g" style="left:1219px;top:751.53px;letter-spacing:-0.2px">А/АВ</div><div class="t d" style="left:11px;width:47px;top:773.45px;text-align:center;letter-spacing:-0.3px">30</div><div class="t d" style="left:63px;top:773.45px;letter-spacing:-0.6px">230</div><div class="t g n" style="left:235px;top:773.45px">08.12.2015 19:30:00.000</div><div class="t g" style="left:407px;top:773.45px;letter-spacing:-0.17px">А1. Общий ввод Тр-р №1</div><div class="t g v" style="left:567px;top:773.45px">0.43</div><div class="t g n" style="left:633px;top:773.45px">5:30:00.000000</div><div class="t lk" style="left:737px;top:773.45px;letter-spacing:-0.75px">PQE6:426</div><div class="t g c" style="left:810px;top:773.45px">Гармонические составляющие напряжения</div><div class="t g c" style="left:1086px;top:773.45px">Гармоника Н15</div><div class="t g" style="left:1219px;top:773.45px;letter-spacing:-0.2px">В/ВС</div><div class="t d" style="left:11px;width:47px;top:795.38px;text-align:center;letter-spacing:-0.3px">31</div><div class="t d" style="left:63px;top:795.38px;letter-spacing:-0.6px">230</div><div class="t g n" style="left:235px;top:795.38px">08.12.2015 19:30:00.000</div><div class="t g" style="left:407px;top:795.38px;letter-spacing:-0.17px">А1. Общий ввод Тр-р №1</div><div class="t g v" style="left:567px;top:795.38px">0.48</div><div class="t g n" style="left:633px;top:795.38px">5:30:00.000000</div><div class="t lk" style="left:737px;top:795.38px;letter-spacing:-0.75px">PQE6:426</div><div class="t g c" style="left:810px;top:795.38px">Гармонические составляющие напряжения</div><div class="t g c" style="left:1086px;top:795.38px">Гармоника Н15</div><div class="t g" style="left:1219px;top:795.38px;letter-spacing:-0.2px">С/АС</div><div class="t d" style="left:11px;width:47px;top:817.31px;text-align:center;letter-spacing:-0.3px">32</div><div class="t d" style="left:63px;top:817.31px;letter-spacing:-0.6px">230</div><div class="t g n" style="left:235px;top:817.31px">08.12.2015 16:00:00.000</div><div class="t g" style="left:407px;top:817.31px;letter-spacing:-0.17px">А1. Общий ввод Тр-р №1</div><div class="t g v" style="left:567px;top:817.31px">0.35</div><div class="t g n" style="left:633px;top:817.31px">3:20:00.000000</div><div class="t lk" style="left:737px;top:817.31px;letter-spacing:-0.75px">PQE6:425</div><div class="t g c" style="left:810px;top:817.31px">Гармонические составляющие напряжения</div><div class="t g c" style="left:1086px;top:817.31px">Гармоника Н15</div><div class="t g" style="left:1219px;top:817.31px;letter-spacing:-0.2px">А/АВ</div><div class="t d" style="left:11px;width:47px;top:839.23px;text-align:center;letter-spacing:-0.3px">33</div><div class="t d" style="left:63px;top:839.23px;letter-spacing:-0.6px">230</div><div class="t g n" style="left:235px;top:839.23px">08.12.2015 16:00:00.000</div><div class="t g" style="left:407px;top:839.23px;letter-spacing:-0.17px">А1. Общий ввод Тр-р №1</div><div class="t g v" style="left:567px;top:839.23px">0.37</div><div class="t g n" style="left:633px;top:839.23px">3:20:00.000000</div><div class="t lk" style="left:737px;top:839.23px;letter-spacing:-0.75px">PQE6:425</div><div class="t g c" style="left:810px;top:839.23px">Гармонические составляющие напряжения</div><div class="t g c" style="left:1086px;top:839.23px">Гармоника Н15</div><div class="t g" style="left:1219px;top:839.23px;letter-spacing:-0.2px">В/ВС</div><div class="t d" style="left:11px;width:47px;top:861.16px;text-align:center;letter-spacing:-0.3px">34</div><div class="t d" style="left:63px;top:861.16px;letter-spacing:-0.6px">230</div><div class="t g n" style="left:235px;top:861.16px">08.12.2015 16:00:00.000</div><div class="t g" style="left:407px;top:861.16px;letter-spacing:-0.17px">А1. Общий ввод Тр-р №1</div><div class="t g v" style="left:567px;top:861.16px">0.41</div><div class="t g n" style="left:633px;top:861.16px">3:20:00.000000</div><div class="t lk" style="left:737px;top:861.16px;letter-spacing:-0.75px">PQE6:425</div><div class="t g c" style="left:810px;top:861.16px">Гармонические составляющие напряжения</div><div class="t g c" style="left:1086px;top:861.16px">Гармоника Н15</div><div class="t g" style="left:1219px;top:861.16px;letter-spacing:-0.2px">С/АС</div><div class="t d" style="left:11px;width:47px;top:883.08px;text-align:center;letter-spacing:-0.3px">35</div><div class="t d" style="left:63px;top:883.08px;letter-spacing:-0.6px">230</div><div class="t g n" style="left:235px;top:883.08px">08.12.2015 08:10:29.745015</div><div class="t g" style="left:407px;top:883.08px;letter-spacing:-0.17px">А6. Общий ввод Тр-р №4</div><div class="t g v" style="left:567px;top:883.08px">69.4</div><div class="t g n" style="left:633px;top:883.08px">0:00:00.000125</div><div class="t lk" style="left:737px;top:883.08px;letter-spacing:-0.75px">PQE13:175</div><div class="t g c" style="left:810px;top:883.08px">Импульсное напряжение</div><div class="t g c" style="left:1086px;top:883.08px">Фазное напряжение</div><div class="t g" style="left:1219px;top:883.08px;letter-spacing:-0.2px">В</div><div class="t d v" style="left:1267px;top:883.08px">-160.6</div><div class="t g v" style="left:1388px;top:883.08px">0.21</div><div class="abs" style="left:1578px;top:109px;width:11px;height:794px;background:#e8e8e8"></div><div class="abs" style="left:1578px;top:109px;width:11px;height:68px;background:#cccccc"></div><div class="abs" style="left:1589px;top:100px;width:9px;height:829px;background:#fff"></div><div class="abs" style="left:58px;top:904px;width:1520px;height:15px;background:#e8e8e8"></div><div class="abs" style="left:58px;top:904px;width:1085px;height:15px;background:#cccccc"></div><div class="abs" style="left:10px;top:908px;width:48px;height:11px;background:#cccccc"></div></div>
</body></html>
